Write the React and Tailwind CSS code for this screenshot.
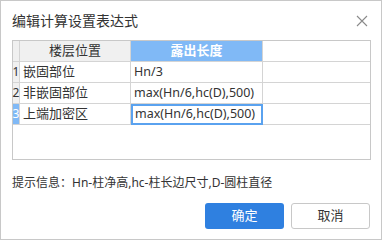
import React from 'react';

const font = { fontFamily: '"Noto Sans", "Noto Sans CJK SC", sans-serif' };

const rows = [
  { n: '1', pos: '嵌固部位', expr: 'Hn/3' },
  { n: '2', pos: '非嵌固部位', expr: 'max(Hn/6,hc(D),500)' },
  { n: '3', pos: '上端加密区', expr: 'max(Hn/6,hc(D),500)', active: true },
];

const CloseIcon = () => (
  <svg width="12" height="12" viewBox="0 0 12 12" className="text-[#8a8a8a]">
    <path d="M1 1L11 11M11 1L1 11" stroke="currentColor" strokeWidth="1.1" />
  </svg>
);

export default function App() {
  return (
    <div
      className="w-[382px] h-[240px] bg-white border border-[#c8c8c8] flex flex-col text-[#333]"
      style={font}
    >
      <div className="h-[39px] flex items-center justify-between pl-[11px] pr-[13px]">
        <span className="text-[14px] leading-none">编辑计算设置表达式</span>
        <CloseIcon />
      </div>

      <div className="ml-[11px] w-[359px] h-[120px] border border-[#c8c8c8] bg-white">
        <div className="flex h-[21px] border-b border-[#d4d4d4]">
          <div className="w-[7px] bg-[#f0f0f0] border-r border-[#d4d4d4]" />
          <div className="w-[111px] bg-[#f0f0f0] border-r border-[#d4d4d4] flex items-center justify-center text-[13px]">
            楼层位置
          </div>
          <div className="w-[132px] bg-[#80b9f6] border-r border-[#d4d4d4] flex items-center justify-center text-[13px] font-bold text-white">
            露出长度
          </div>
        </div>
        {rows.map((r) => (
          <div key={r.n} className="flex h-[21px] border-b border-[#d4d4d4]">
            <div
              className={`w-[7px] border-r border-[#d4d4d4] flex items-center justify-center text-[12px] leading-none ${
                r.active ? 'bg-[#80b9f6] text-white' : 'bg-[#f0f0f0]'
              }`}
            >
              {r.n}
            </div>
            <div className="w-[111px] border-r border-[#d4d4d4] flex items-center pl-[3px] text-[13px]">
              {r.pos}
            </div>
            <div
              className={`w-[132px] flex items-center text-[12.5px] ${
                r.active
                  ? 'border-2 border-[#5aa2ef] -mb-px pl-[2px]'
                  : 'border-r border-[#d4d4d4] pl-[3px]'
              }`}
            >
              {r.expr}
            </div>
          </div>
        ))}
      </div>

      <div className="ml-[11px] mt-[15px] text-[12px] leading-[16px]">
        提示信息：Hn-柱净高,hc-柱长边尺寸,D-圆柱直径
      </div>

      <div className="flex justify-end gap-[7px] mr-[11px] mt-[12px]">
        <button className="w-[79px] h-[26px] rounded-[3px] bg-[#2f80e0] text-white text-[13px]">
          确定
        </button>
        <button className="w-[79px] h-[26px] rounded-[3px] bg-white border border-[#c8c8c8] text-[13px]">
          取消
        </button>
      </div>
    </div>
  );
}
